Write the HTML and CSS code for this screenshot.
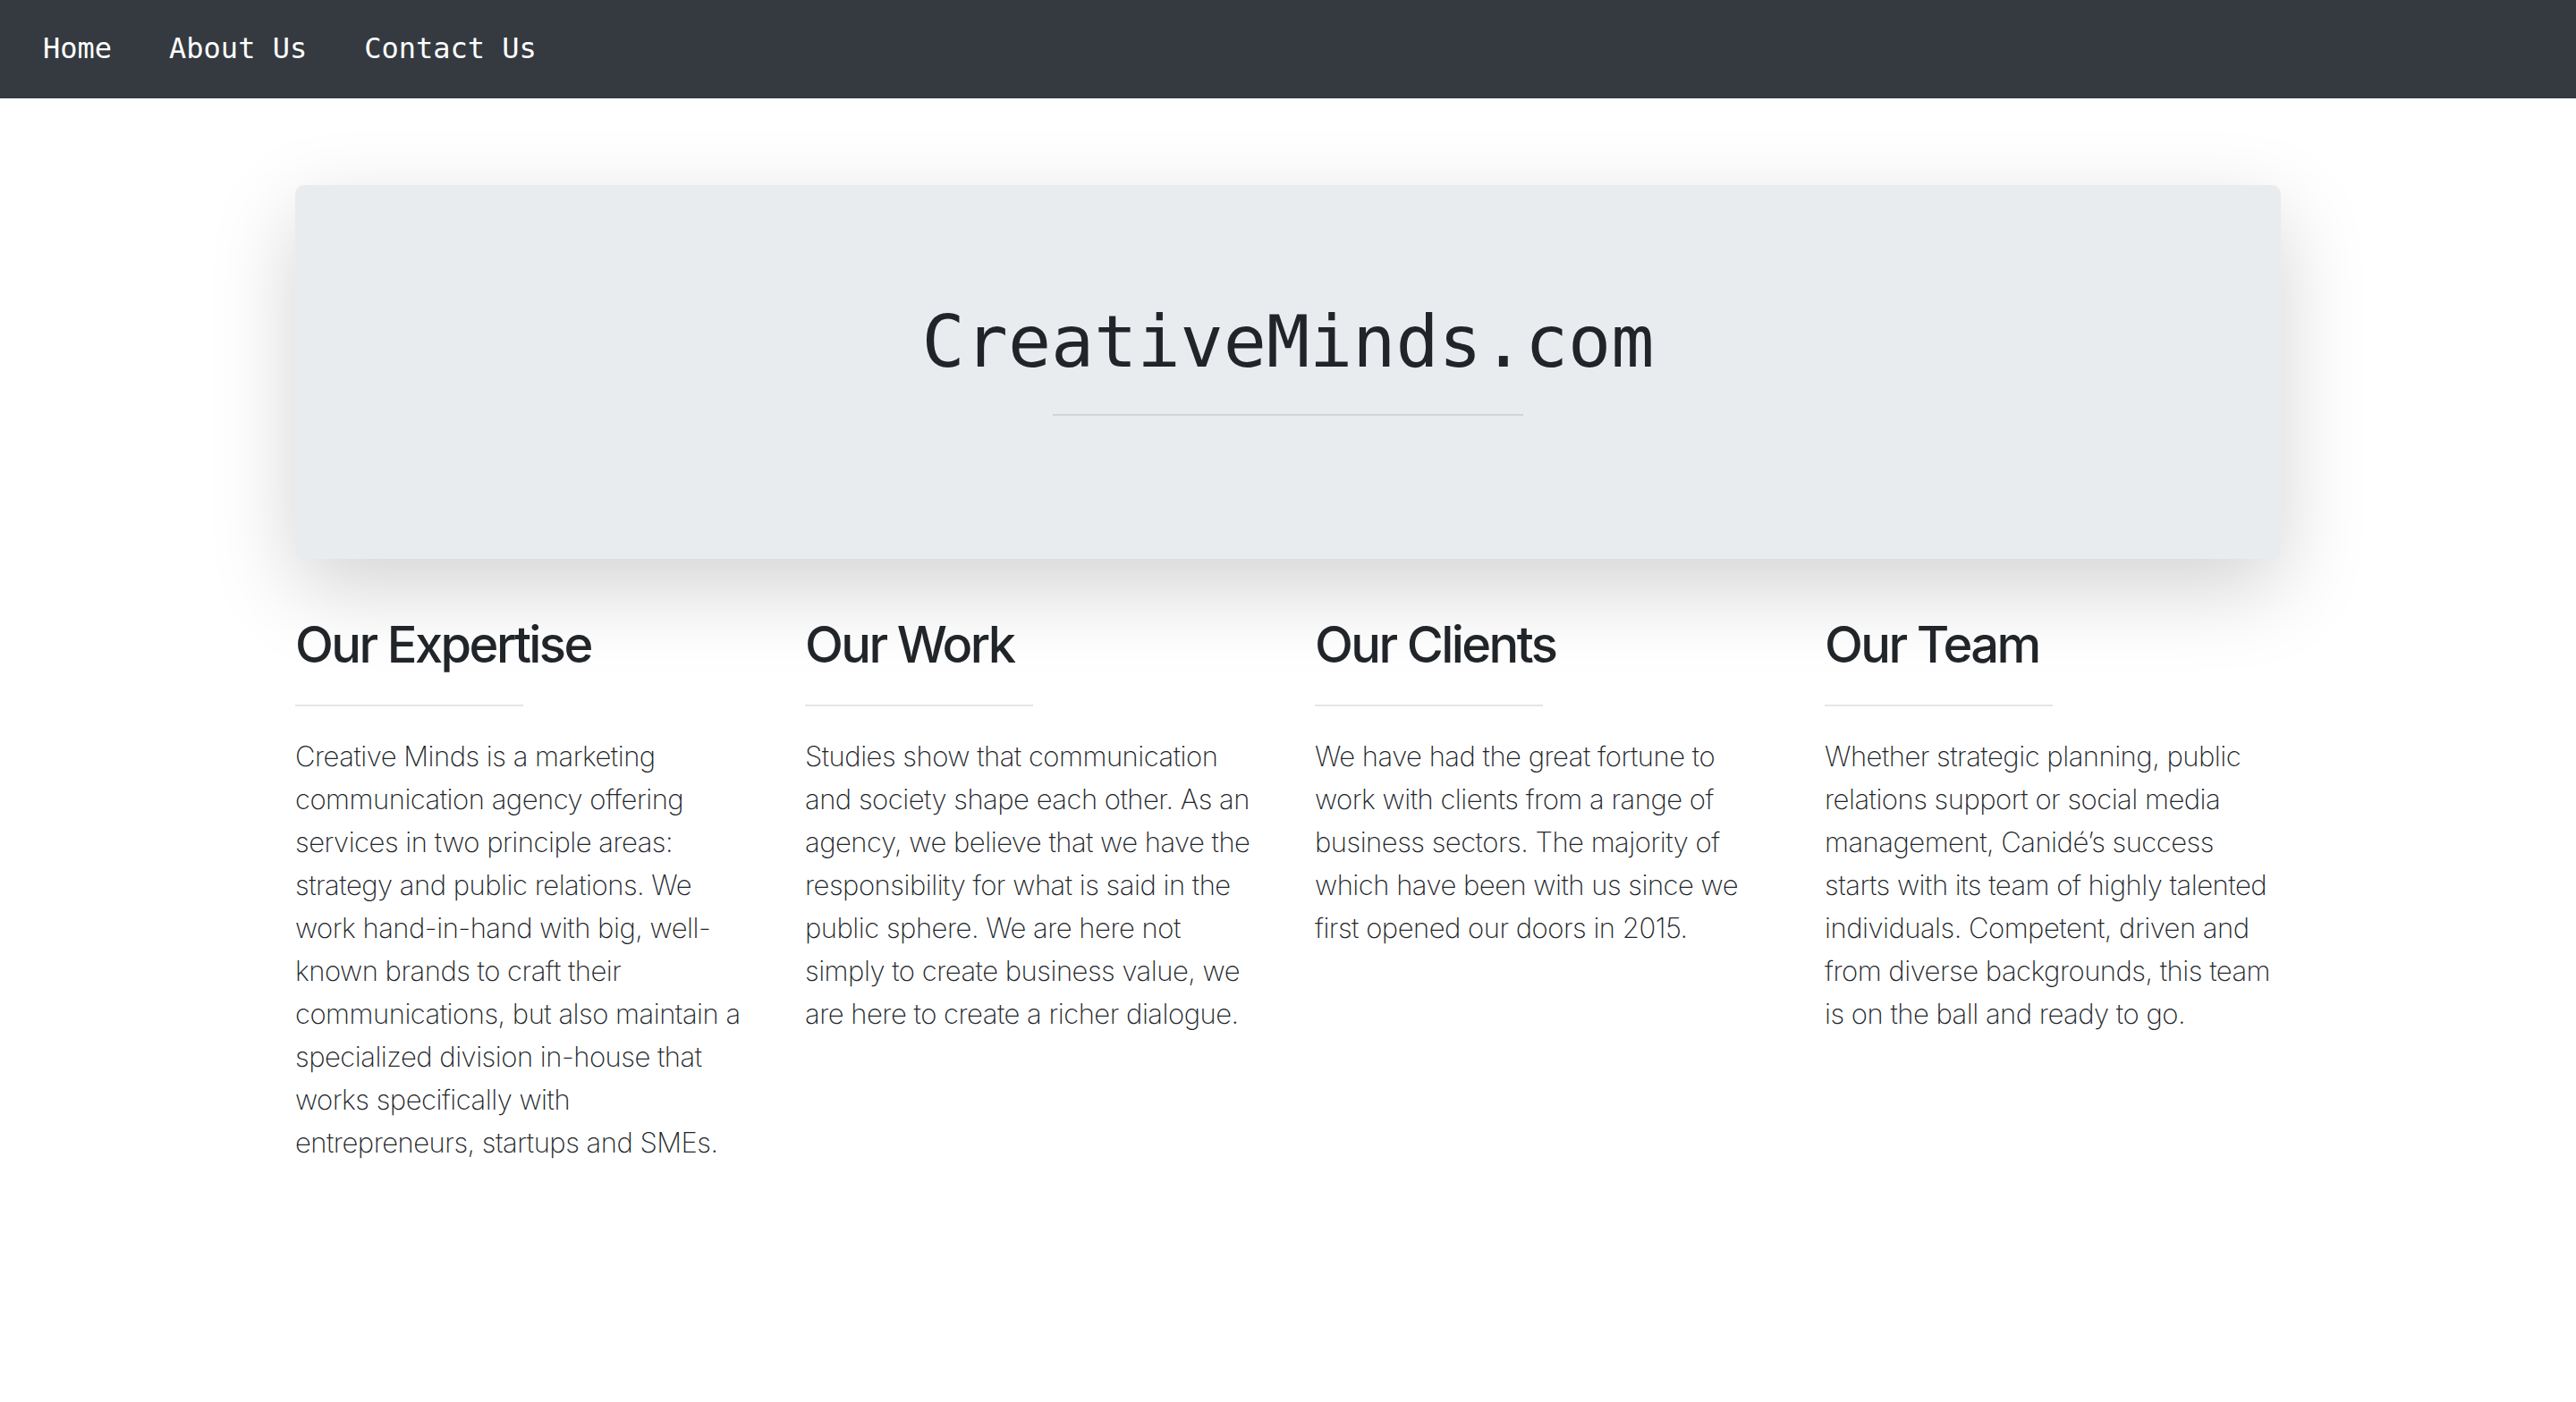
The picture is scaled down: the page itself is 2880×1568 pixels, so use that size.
FILE: index.html
```html
<!DOCTYPE html>
<html lang="en">
<head>
<meta charset="utf-8">
<title>CreativeMinds.com</title>
<link rel="stylesheet" href="styles.css">
</head>
<body>
<nav class="navbar">
  <a class="nav-link" href="#">Home</a>
  <a class="nav-link" href="#">About Us</a>
  <a class="nav-link" href="#">Contact Us</a>
</nav>
<main class="container">
  <section class="jumbotron">
    <h1 class="title">CreativeMinds.com</h1>
    <hr class="title-rule">
  </section>
  <div class="row">
    <div class="col">
      <h2>Our Expertise</h2>
      <hr class="col-rule">
      <p>Creative Minds is a marketing communication agency offering services in two principle areas: strategy and public relations. We work hand-in-hand with big, well-known brands to craft their communications, but also maintain a specialized division in-house that works specifically with entrepreneurs, startups and SMEs.</p>
    </div>
    <div class="col">
      <h2>Our Work</h2>
      <hr class="col-rule">
      <p>Studies show that communication and society shape each other. As an agency, we believe that we have the responsibility for what is said in the public sphere. We are here not simply to create business value, we are here to create a richer dialogue.</p>
    </div>
    <div class="col">
      <h2>Our Clients</h2>
      <hr class="col-rule">
      <p>We have had the great fortune to work with clients from a range of business sectors. The majority of which have been with us since we first opened our doors in 2015.</p>
    </div>
    <div class="col">
      <h2>Our Team</h2>
      <hr class="col-rule">
      <p>Whether strategic planning, public relations support or social media management, Canidé’s success starts with its team of highly talented individuals. Competent, driven and from diverse backgrounds, this team is on the ball and ready to go.</p>
    </div>
  </div>
</main>
</body>
</html>
```
FILE: styles.css
```css
* { box-sizing: border-box; }
html, body { margin: 0; padding: 0; }
body {
  background: #fff;
  color: #212529;
  font-family: Inter, "Noto Sans", sans-serif;
  font-size: 32px;
  line-height: 1.5;
}
.navbar {
  background: #343a40;
  height: 110px;
  display: flex;
  align-items: center;
  padding-left: 48px;
  padding-bottom: 3px;
  gap: 64px;
}
.nav-link {
  color: #fff;
  text-decoration: none;
  font-family: "DejaVu Sans Mono", monospace;
  font-size: 32px;
  line-height: 48px;
}
.container {
  width: 2280px;
  margin: 0 auto;
  padding: 0 30px;
}
.jumbotron {
  margin-top: 97px;
  margin-bottom: 59px;
  background: #e9ecef;
  border-radius: 10px;
  padding: 128px 64px;
  box-shadow: 0 32px 96px rgba(0, 0, 0, 0.175);
  text-align: center;
}
.title {
  margin: 0;
  font-family: "DejaVu Sans Mono", monospace;
  font-weight: 400;
  font-size: 80px;
  line-height: 96px;
  color: #212529;
}
.title-rule {
  width: 526px;
  margin: 32px auto;
  border: 0;
  border-top: 2px solid rgba(0, 0, 0, 0.1);
}
.row {
  display: flex;
  margin: 0 -30px;
}
.col {
  flex: 1 1 0;
  padding: 0 30px;
}
h2 {
  margin: 0;
  font-size: 56px;
  font-weight: 500;
  line-height: 74px;
  letter-spacing: -2.6px;
}
.col-rule {
  width: 50%;
  margin: 30px 0 32px;
  border: 0;
  border-top: 2px solid rgba(0, 0, 0, 0.1);
}
p {
  margin: 0;
  font-weight: 200;
  font-size: 31px;
  line-height: 48px;
  letter-spacing: -0.5px;
  color: #212529;
}
```
